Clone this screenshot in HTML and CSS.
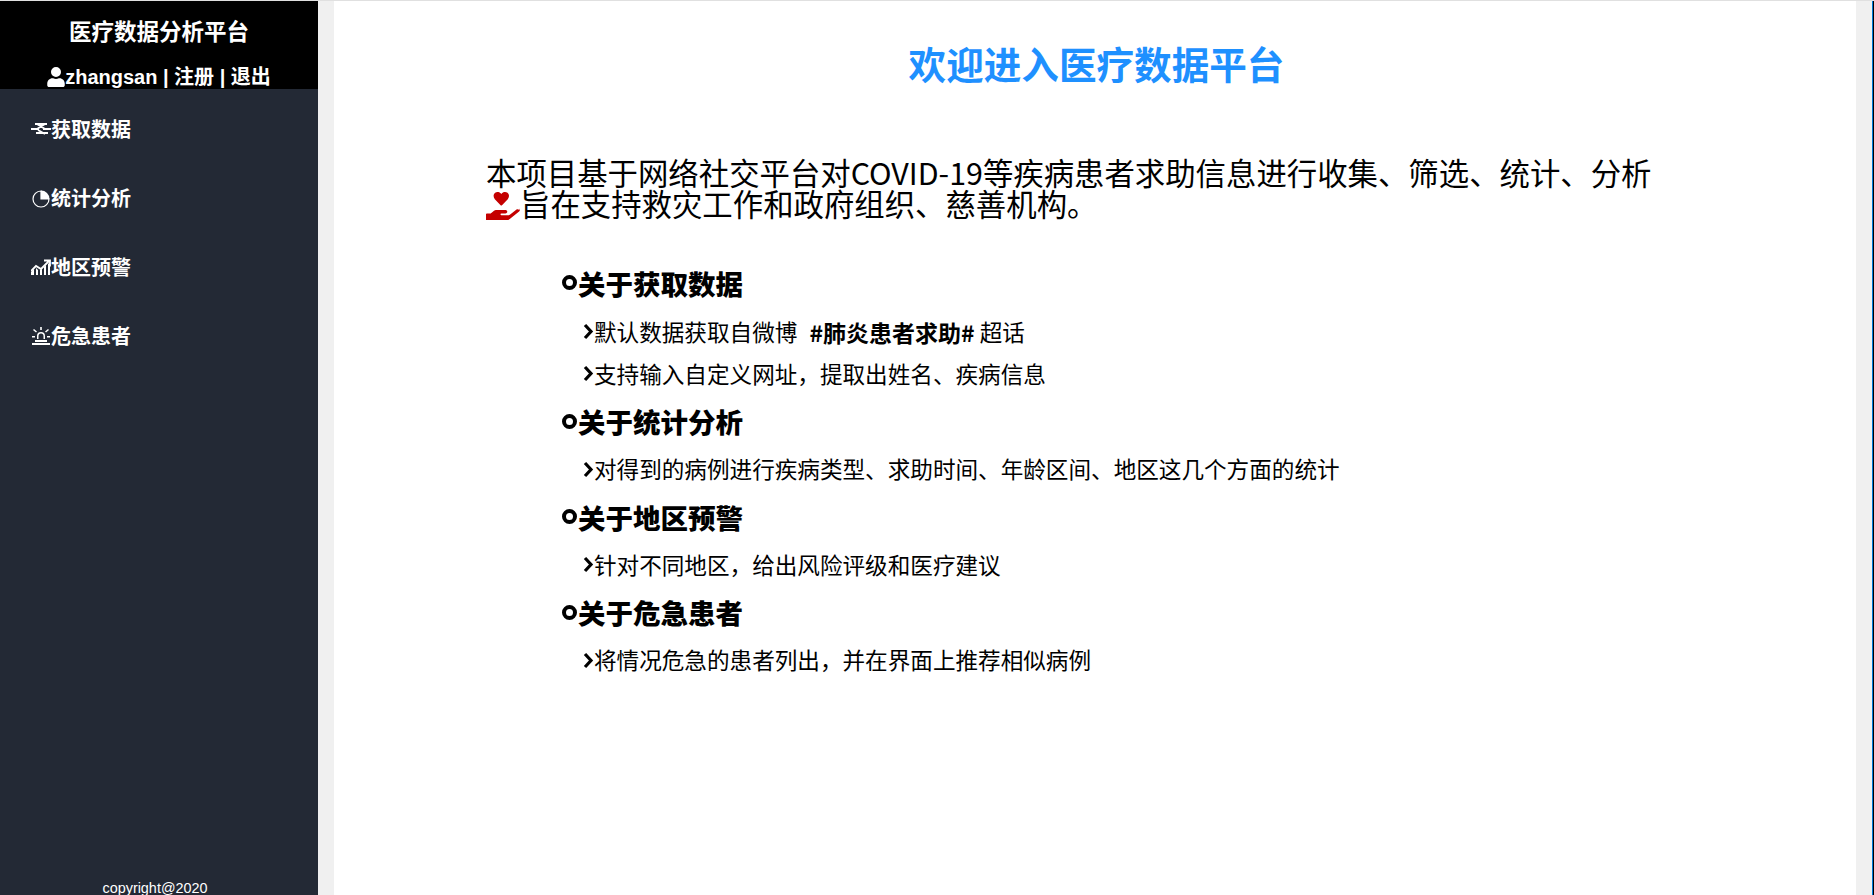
FILE: index.html
```html
<!DOCTYPE html>
<html lang="en">
<head>
    <meta charset="UTF-8">
    <title>医疗数据分析平台</title>
    <link rel="stylesheet" href="styles.css">
</head>
<body>
    <div id="maindiv">
        <div id="sidebar">
            <div id="brand">
                <div class="brand-title">医疗数据分析平台</div>
                <div class="brand-user">
                    <svg class="user-icon" viewBox="0 0 448 512"><path fill="currentColor" d="M224 256a128 128 0 1 0 0-256 128 128 0 0 0 0 256zm90 32h-17a174 174 0 0 1-146 0h-17C60 288 0 348 0 422v42c0 27 21 48 48 48h352c27 0 48-21 48-48v-42c0-74-60-134-134-134z"/></svg><span>zhangsan | 注册 | 退出</span>
                </div>
            </div>
            <ul id="nav">
                <li class="nav-item">
                    <svg class="nav-icon" viewBox="0 0 20 20"><path fill="none" stroke="currentColor" stroke-width="1.800" d="M4 5h12M6 5l8 5M14 5l-8 5M0 10h8M12 10h8M5 14h12M7 11l7 4"/></svg><span>获取数据</span>
                </li>
                <li class="nav-item">
                    <svg class="nav-icon" viewBox="0 0 20 20"><path fill="none" stroke="currentColor" stroke-width="1.200" d="M10 3a8 8 0 1 0 8 8h-8z"/><path fill="currentColor" d="M10 2.500a8.500 8.500 0 0 1 8.500 8.500H10z"/></svg><span>统计分析</span>
                </li>
                <li class="nav-item">
                    <svg class="nav-icon" viewBox="0 0 20 20"><path fill="currentColor" d="M0 18v-3l3-3v6zM5 18v-7l2 2v5zM9 18v-5l2-1v6zM13 18v-8l2-2v10zM17 18V7l2-2v13z"/><path fill="none" stroke="currentColor" stroke-width="1.800" d="M0 14l5-5 5 3 8-8M13 3.500h6v6"/></svg><span>地区预警</span>
                </li>
                <li class="nav-item">
                    <svg class="nav-icon" viewBox="0 0 20 20"><path fill="currentColor" d="M1 17h18v2H1zM4 14h12v2H4zM6 13v-3a4 4 0 0 1 8 0v3h-1.500v-3a2.500 2.500 0 0 0-5 0v3zM9.200 1h1.600v3H9.200zM2 4l1-1 3 2.500-1 1zM18 4l-1-1-3 2.500 1 1zM1 10h3v1.500H1zM16 10h3v1.500h-3z"/></svg><span>危急患者</span>
                </li>
            </ul>
            <div id="copyright">copyright@2020</div>
        </div>
        <div id="content">
            <h1>欢迎进入医疗数据平台</h1>
            <p class="intro">本项目基于网络社交平台对COVID-19等疾病患者求助信息进行收集、筛选、统计、分析<br><svg class="heart-icon" viewBox="0 0 640 512"><path fill="#c40000" d="M275 250c7 7 19 7 26 0l109-114c32-33 30-88-5-118-31-26-77-21-105 9l-12 12-12-12C248-3 202-8 171 18c-35 30-37 85-5 118zM629 344c-15-19-42-22-60-8l-108 86c-13 11-30 17-48 17H288c-9 0-16-7-16-16s7-16 16-16h78c16 0 31-11 34-27 3-20-12-37-32-37H208c-27 0-53 9-74 26l-46 38H16c-9 0-16 7-16 16v96c0 9 7 16 16 16h357c29 0 57-10 80-28l170-136c19-15 22-42 6-60z"/></svg>旨在支持救灾工作和政府组织、慈善机构。</p>
            <ul class="topics">
                <li class="topic">
                    <h3><span class="ring"></span>关于获取数据</h3>
                    <div class="line"><svg class="chevron" viewBox="0 0 11 17"><path d="M2 2l6 6.500-6 6.500" fill="none" stroke="currentColor" stroke-width="3.200"/></svg>默认数据获取自微博 &nbsp;<b>#肺炎患者求助#</b> 超话</div>
                    <div class="line"><svg class="chevron" viewBox="0 0 11 17"><path d="M2 2l6 6.500-6 6.500" fill="none" stroke="currentColor" stroke-width="3.200"/></svg>支持输入自定义网址，提取出姓名、疾病信息</div>
                </li>
                <li class="topic">
                    <h3><span class="ring"></span>关于统计分析</h3>
                    <div class="line"><svg class="chevron" viewBox="0 0 11 17"><path d="M2 2l6 6.500-6 6.500" fill="none" stroke="currentColor" stroke-width="3.200"/></svg>对得到的病例进行疾病类型、求助时间、年龄区间、地区这几个方面的统计</div>
                </li>
                <li class="topic">
                    <h3><span class="ring"></span>关于地区预警</h3>
                    <div class="line"><svg class="chevron" viewBox="0 0 11 17"><path d="M2 2l6 6.500-6 6.500" fill="none" stroke="currentColor" stroke-width="3.200"/></svg>针对不同地区，给出风险评级和医疗建议</div>
                </li>
                <li class="topic">
                    <h3><span class="ring"></span>关于危急患者</h3>
                    <div class="line"><svg class="chevron" viewBox="0 0 11 17"><path d="M2 2l6 6.500-6 6.500" fill="none" stroke="currentColor" stroke-width="3.200"/></svg>将情况危急的患者列出，并在界面上推荐相似病例</div>
                </li>
            </ul>
        </div>
        <div id="rightbar"></div>
    </div>
</body>
</html>
```

FILE: styles.css
```css
html, body {
    height: 100%;
}

body {
    font-family: "Liberation Sans", "Noto Sans CJK SC", sans-serif;
    margin: 0;
    padding: 0;
    background-color: #f0f0f0;
    overflow: hidden;
}

#maindiv {
    display: flex;
    height: 894px;
    border-top: 1px solid #e0e0e0;
}

#sidebar {
    width: 318px;
    flex-shrink: 0;
    display: flex;
    flex-direction: column;
    background-color: #232935;
    color: #fff;
}

#brand {
    height: 88px;
    background-color: #000;
    text-align: center;
    font-weight: bold;
}

.brand-title {
    font-size: 22.500px;
    line-height: 30px;
    padding-top: 17px;
}

.brand-user {
    display: flex;
    justify-content: center;
    align-items: center;
    font-size: 20px;
    line-height: 24px;
    margin-top: 17px;
}

.user-icon {
    width: 18px;
    height: 20px;
}

#nav {
    list-style: none;
    margin: 0;
    padding: 5px 0 0 31px;
    flex: 1;
}

.nav-item {
    display: flex;
    align-items: center;
    height: 69px;
    font-size: 20px;
    font-weight: bold;
}

.nav-icon {
    width: 20px;
    height: 20px;
}

#copyright {
    font-size: 14.400px;
    line-height: 16px;
    text-align: center;
    padding-right: 8px;
    margin-bottom: -1px;
}

#content {
    width: 1522px;
    margin-left: 16px;
    background-color: #fff;
    color: #000;
    box-sizing: border-box;
    padding: 0 150px 0 153px;
    font-family: "Noto Sans CJK SC", sans-serif;
}

h1 {
    color: #1e90ff;
    font-size: 37.600px;
    line-height: 48px;
    text-align: center;
    margin: 38px 0 0 0;
}

.intro {
    font-size: 30.400px;
    line-height: 31px;
    margin: 70px 0 0 0;
    margin-left: -1px;
}

.heart-icon {
    width: 34px;
    height: 29px;
    vertical-align: -4px;
}

.topics {
    list-style: none;
    margin: 44.500px 0 0 0;
    padding: 0 0 0 75px;
}

.topic h3 {
    display: flex;
    align-items: center;
    font-size: 27.500px;
    font-weight: 900;
    line-height: 36px;
    margin: 8.500px 0 9px;
}

.topic:first-child h3 {
    margin-bottom: 10px;
}

.ring {
    width: 7px;
    height: 7px;
    border: 4px solid #000;
    border-radius: 50%;
    margin-right: 1px;
}

.line {
    display: flex;
    align-items: center;
    font-size: 22.600px;
    line-height: 30px;
    padding: 6px 0 6px 21px;
    white-space: pre;
}

.line b {
    font-size: 23px;
    margin-left: 2px;
}

.chevron {
    width: 11px;
    height: 17px;
}

#rightbar {
    flex: 1;
    border-right: 1px solid #000;
    background: linear-gradient(to right, #f0f0f0 16px, #0078d7 16px);
}
```
